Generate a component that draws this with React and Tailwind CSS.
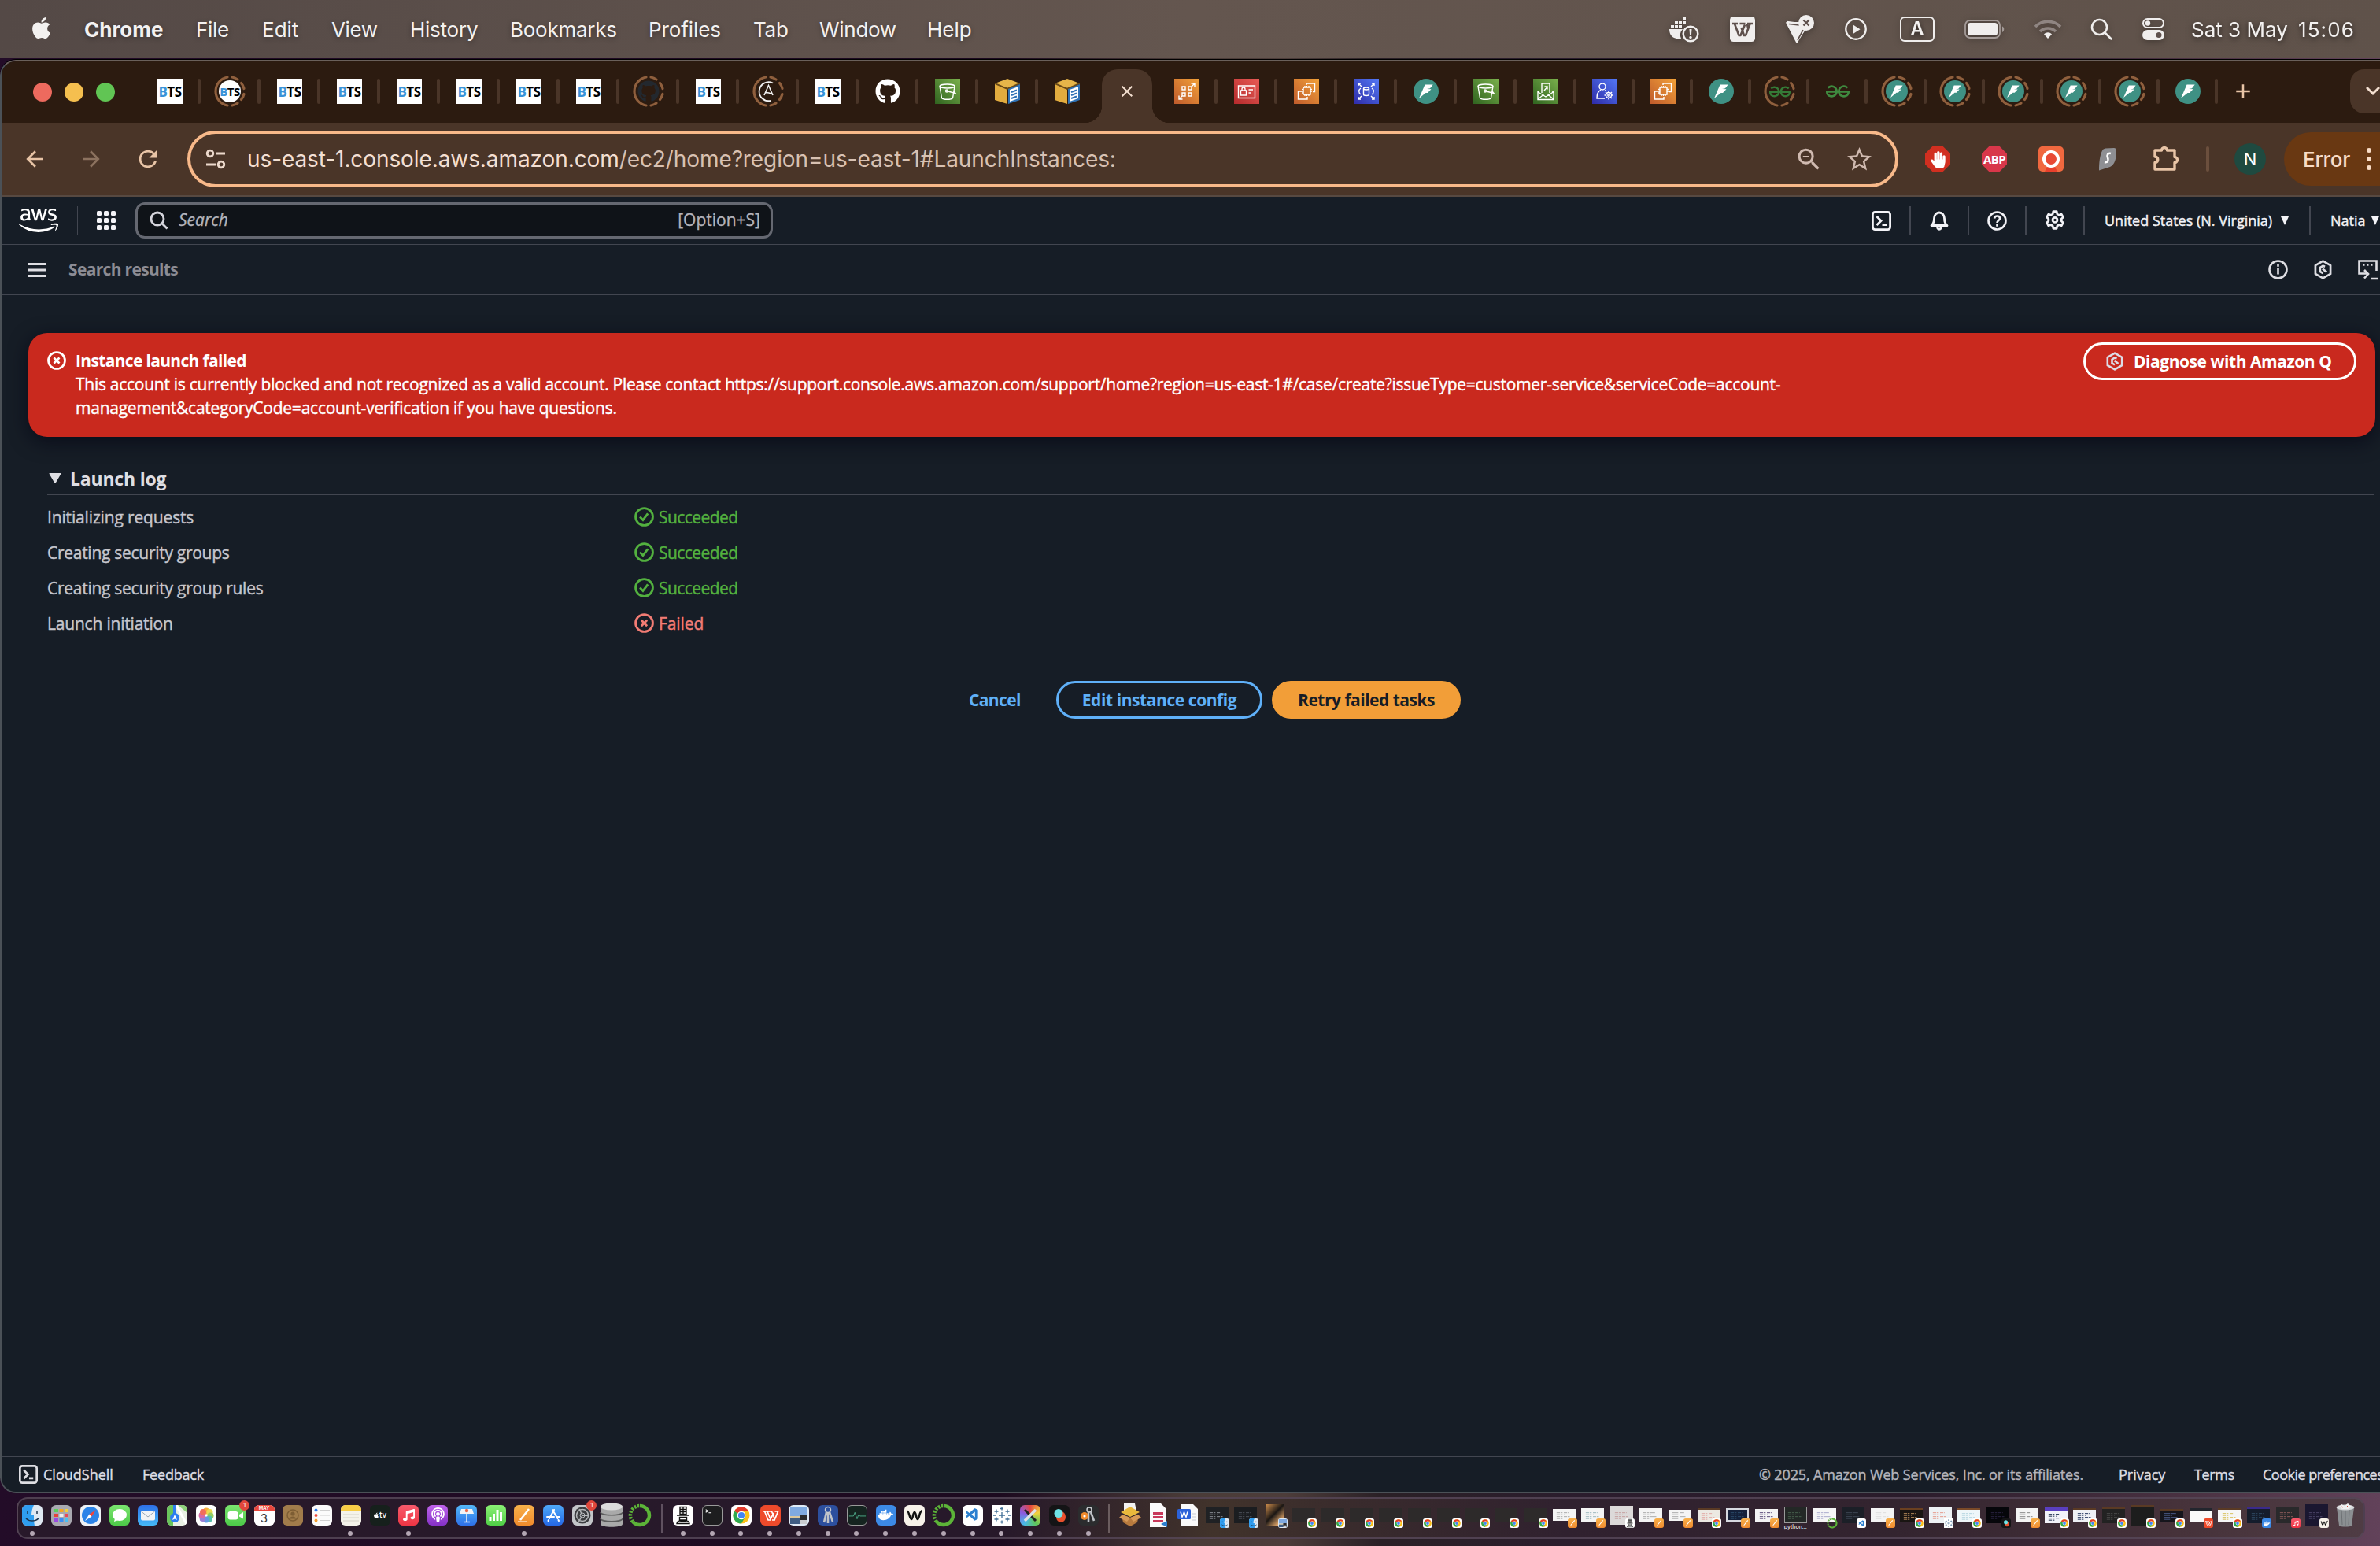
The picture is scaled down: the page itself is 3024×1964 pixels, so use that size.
import React from "react";
import { FaApple, FaGithub, FaDocker, FaHandPaper, FaAws, FaMusic, FaPodcast } from "react-icons/fa";
import { MdStarBorder, MdZoomOut, MdArrowBack, MdArrowForward, MdRefresh, MdOutlineExtension, MdClose, MdAdd } from "react-icons/md";
import { SiGeeksforgeeks } from "react-icons/si";
import { VscVscode } from "react-icons/vsc";

const T = ({ c = "", children }) => <span className={"whitespace-nowrap " + c}>{children}</span>;

/* ---------- macOS menu bar ---------- */

const menus = [
  ["Chrome", "w-[142px] font-bold"],
  ["File", "w-[84px] tracking-[-0.3px]"],
  ["Edit", "w-[88px]"],
  ["View", "w-[100px] tracking-[-0.4px]"],
  ["History", "w-[127px] tracking-[-0.25px]"],
  ["Bookmarks", "w-[176px] tracking-[-0.25px]"],
  ["Profiles", "w-[133px] tracking-[-0.1px]"],
  ["Tab", "w-[84px] tracking-[-0.3px]"],
  ["Window", "w-[137px] tracking-[-0.3px]"],
  ["Help", "w-[80px]"],
];

function MenuBar() {
  return (
    <div className="flex h-[74px] items-center bg-linear-to-r from-[#544946] via-[#64564f] to-[#5f524a] pl-[39px] text-[26px] text-[#f3f1f0] [text-shadow:0_2px_6px_rgba(0,0,0,0.35)]">
      <div className="w-[68px]"><FaApple size={31} className="-mt-1 -ml-[2px]" /></div>
      {menus.map(([name, c]) => (
        <div key={name} className={c}><T>{name}</T></div>
      ))}
      <div className="ml-auto flex items-center drop-shadow-[0_2px_4px_rgba(0,0,0,0.3)]">
        <svg width="40" height="34" viewBox="0 0 40 34" className="mr-[38px]" fill="#f0eeed">
          <path d="M1 17h17a11 11 0 0 0-2 12c-3 1-6 0-9-1-4-2-6-6-6-11z" />
          <path d="M3 12h4v4H3zM8 12h4v4H8zM13 12h4v4h-4zM8 7h4v4H8zM13 7h4v4h-4zM18 7h4v4h-4zM18 2h4v4h-4z" />
          <circle cx="28" cy="23" r="9.3" fill="none" stroke="#f0eeed" strokeWidth="2.5" />
          <path d="M26.5 17h3l-.5 7h-2z" /><circle cx="28" cy="27.5" r="1.7" />
        </svg>
        <svg width="32" height="32" viewBox="0 0 32 32" className="mr-[38px]">
          <rect width="32" height="32" rx="4.5" fill="#f0eeed" />
          <path d="M3 9h7M6 9.500l5.500 14.500h2L19 10.500M12.500 9h7M14.500 14l3.500 10h2L25.500 9.500M22 9h7M22 9.500l1 5" fill="none" stroke="#5e504c" strokeWidth="2.600" strokeLinejoin="round" />
        </svg>
        <svg width="38" height="38" viewBox="0 0 38 38" className="mr-[38px]">
          <path d="M2 10h16c0 6 3 9 8 10L15 35z" fill="#f0eeed" />
          <path d="M2 10l13 25 9-15M2 10l16 2" fill="none" stroke="#f0eeed" strokeWidth="2.500" strokeLinejoin="round" />
          <path d="M5 12.500l13 1.500M23 20l-7 13" stroke="#5e504c" strokeWidth="1.600" />
          <circle cx="27" cy="11" r="10" fill="#f0eeed" />
          <path d="M23.500 7.500l7 7m0-7l-7 7" stroke="#5e504c" strokeWidth="2.400" />
        </svg>
        <svg width="28" height="28" viewBox="0 0 28 28" className="mr-[42px]">
          <circle cx="14" cy="14" r="12.700" fill="none" stroke="#f0eeed" strokeWidth="2.400" />
          <path d="M10.500 8.500v11.500l9-5.800z" fill="#f0eeed" />
        </svg>
        <div className="mr-[38px] flex h-[32px] w-[44px] items-center justify-center rounded-[6px] border-2 border-[#f0eeed] text-[24px] font-semibold">A</div>
        <svg width="52" height="25" viewBox="0 0 52 25" className="mr-[36px]">
          <rect x="1" y="1" width="44" height="22" rx="6" fill="none" stroke="#a39a97" strokeWidth="1.800" />
          <rect x="4" y="4" width="38" height="16" rx="3.500" fill="#f0eeed" />
          <path d="M48 8.500c3 1 3 6 0 7.500z" fill="#a39a97" />
        </svg>
        <svg width="36" height="26" viewBox="0 0 36 26" className="mr-[36px]" fill="none" strokeWidth="3.600">
          <path d="M2 10a22.500 22.500 0 0 1 32 0" stroke="#8f8582" />
          <path d="M8 16a14.500 14.500 0 0 1 20 0" stroke="#8f8582" />
          <path d="M18 25l-5-5.500c3-3 7-3 10 0z" fill="#f0eeed" />
        </svg>
        <svg width="28" height="28" viewBox="0 0 28 28" className="mr-[38px]" fill="none" stroke="#f0eeed" strokeWidth="2.500">
          <circle cx="11.500" cy="11.500" r="9.500" /><path d="M18.500 18.500l8 8" strokeLinecap="round" />
        </svg>
        <svg width="28" height="28" viewBox="0 0 28 28" className="mr-[34px]">
          <rect x="1" y="1" width="26" height="11" rx="5.500" fill="none" stroke="#f0eeed" strokeWidth="2" /><circle cx="7" cy="6.500" r="3.200" fill="#f0eeed" />
          <rect x="0" y="15" width="28" height="13" rx="6.500" fill="#f0eeed" /><circle cx="21" cy="21.500" r="3.500" fill="#5e504c" />
        </svg>
        <div className="w-[136px]"><T>Sat 3 May</T></div>
        <div className="w-[104px] tracking-[1.1px]"><T>15:06</T></div>
      </div>
    </div>
  );
}

/* ---------- Tab favicons ---------- */

const Ring = ({ children }) => (
  <div className="relative flex size-[40px] items-center justify-center">
    <svg viewBox="0 0 40 40" className="absolute inset-0" fill="none" stroke="#8f5f3d" strokeWidth="3.200" strokeLinecap="round">
      <path d="M17 2A18.300 18.300 0 0 0 17 38" />
      <path d="M23 2a18 18 0 0 1 7 3M34.500 9.500a18 18 0 0 1 3.500 7M38 23.500a18 18 0 0 1-3.500 7M30 35a18 18 0 0 1-7 3" />
    </svg>
    {children}
  </div>
);
const BtsText = ({ c }) => (
  <span className={"font-bold leading-none tracking-[-0.5px] text-black " + c}><span className="text-[#3a93d8]">B</span>TS</span>
);
const Bts = () => <div className="flex size-[32px] items-center justify-center bg-white font-['Open_Sans',sans-serif]"><BtsText c="text-[17px]" /></div>;
const BtsRing = () => <Ring><div className="flex size-[28px] items-center justify-center rounded-full bg-white font-['Open_Sans',sans-serif]"><BtsText c="text-[15px]" /></div></Ring>;
const GhRing = () => <Ring><FaGithub size={28} color="#23282e" /></Ring>;
const ARing = () => (
  <Ring>
    <svg width="28" height="28" viewBox="0 0 28 28" fill="none" stroke="#f2f2f2" strokeWidth="1.800">
      <path d="M20 3.500A12 12 0 1 0 17 26" /><path d="M9 19l5.500-12.500L20 19M11 15.500c3 0 5 .5 8 2" strokeWidth="1.600" />
    </svg>
  </Ring>
);
const Gh = () => <FaGithub size={32} color="#fff" />;
const Tile = ({ c, children }) => (
  <div className={"size-[32px] bg-linear-to-tr " + c}>
    <svg viewBox="0 0 32 32" fill="none" stroke="#fff" strokeWidth="1.400">{children}</svg>
  </div>
);
const Bucket = () => (
  <Tile c="from-[#306420] to-[#7ab04c]">
    <ellipse cx="15.500" cy="9.500" rx="9.500" ry="2.500" /><path d="M6 9.500l2.500 15c2 2.400 12 2.400 14 0l2.500-15" /><circle cx="15" cy="15.500" r="1.500" /><path d="M16.500 16l9.500 2.500-2-2.500" />
  </Tile>
);
const Mail = () => (
  <Tile c="from-[#306420] to-[#7ab04c]">
    <path d="M8 16H6v10.500h20V16h-2M6 26l7.500-6M26 26l-7.500-6M6.500 17l9.500 6 9.500-6M11 18V6h10v12M14 15l4-4.500M14.500 10H18v3.500" />
  </Tile>
);
const Scale = () => (
  <Tile c="from-[#bf5b2c] to-[#f2a138]">
    <path d="M10 10h4v4h-4zM18 10h4v4h-4zM10 18h4v4h-4zM18 18h4v4h-4zM22 10l4-4M21.500 6H26v4.500M10 22l-4 4M10.500 26H6v-4.500" />
  </Tile>
);
const Iam = () => (
  <Tile c="from-[#b52a2c] to-[#e85a55]">
    <path d="M5.500 9h21v15.500h-21zM8.500 15h7v6h-7zM10 15v-2a2 2 0 0 1 4 0v2M18.500 14h5.500M18.500 18h3" />
  </Tile>
);
const Ec2 = () => (
  <Tile c="from-[#bf5b2c] to-[#f2a138]">
    <path d="M12 11h9v9h-9zM14 11V9M16.500 11V9M19 11V9M14 22v-2M16.500 22v-2M19 22v-2M12 13.500h-2M12 16h-2M12 18h-2M23 13.500h-2M23 16h-2M16 8V6h10.500v10.500H24M10 16H5.500v10H17v-3" />
  </Tile>
);
const Rds = () => (
  <Tile c="from-[#2f2aa8] to-[#5478f5]">
    <ellipse cx="16" cy="12.500" rx="3.500" ry="1.500" /><path d="M12.500 12.500v7.500c0 2 7 2 7 0v-7.500M6 9V6h3M6 6l4 4M26 9V6h-3M26 6l-4 4M6 23v3h3M6 26l4-4M26 23v3h-3M26 26l-4-4M9 12c-3 2-3 6 0 8M23 12c3 2 3 6 0 8" />
  </Tile>
);
const Cognito = () => (
  <Tile c="from-[#2f2aa8] to-[#5478f5]">
    <circle cx="13" cy="10" r="4" /><path d="M16 25H6c0-5 1-9 5-10.500M16 14.500l2 1.500" /><circle cx="21" cy="21" r="3.500" /><circle cx="21" cy="21" r="1.200" /><path d="M21 15.500v2M21 24.500v2M15.500 21h2M24.500 21h2M17 17l1.500 1.500M23.500 23.500L25 25M25 17l-1.500 1.500M17 25l1.500-1.500" />
  </Tile>
);
const Box = () => (
  <svg width="32" height="32" viewBox="0 0 32 32">
    <path d="M0 6l16-6 16 6-16 6z" fill="#e6b549" /><path d="M0 6l16 7v19L0 27z" fill="#e2ac3f" /><path d="M0 6l16 7 16-7" fill="none" stroke="#6a4a18" strokeWidth="2" />
    <path d="M17 13l15-6v20l-15 5z" fill="#2f72b5" /><path d="M19 14l11-4v15l-11 4z" fill="#fff" /><path d="M21 17l7-2.500M21 21l7-2.500M21 25l7-2.500" stroke="#2f72b5" strokeWidth="2" />
  </svg>
);
const Bolt = ({ s = 32 }) => (
  <svg width={s} height={s} viewBox="0 0 32 32"><circle cx="16" cy="16" r="16" fill="#3f9184" /><path d="M14.500 7.500h10.200L21 12.200l-4 .8 5.500.2L18 18h-2.500L7 25z" fill="#fff" /></svg>
);
const BoltRing = () => <Ring><Bolt s={28} /></Ring>;
const Gfg = () => <SiGeeksforgeeks size={30} color="#3f8a3f" />;
const GfgRing = () => <Ring><SiGeeksforgeeks size={27} color="#357a37" /></Ring>;

const left = [Bts, BtsRing, Bts, Bts, Bts, Bts, Bts, Bts, GhRing, Bts, ARing, Bts, Gh, Bucket, Box, Box];
const right = [Scale, Iam, Ec2, Rds, Bolt, Bucket, Mail];
const right2 = [Cognito, Ec2, Bolt, GfgRing, Gfg, BoltRing, BoltRing, BoltRing, BoltRing, BoltRing, Bolt];

const Tab = ({ Icon, w, sep = true }) => (
  <div className={"relative flex h-[40px] shrink-0 items-center justify-center " + w}>
    <Icon />
    {sep && <div className="absolute top-[4px] -right-[1px] h-[32px] w-[4px] rounded-full bg-[#4a3528]" />}
  </div>
);

function TabStrip() {
  return (
    <div className="flex h-[78px] items-center bg-[#2c1b10] pb-[2px] pl-[40px]">
      <div className="flex w-[136px] gap-[16px] pt-[2px]">
        <div className="size-[24px] rounded-full bg-[#ed6a5e]" />
        <div className="size-[24px] rounded-full bg-[#f5bf4f]" />
        <div className="size-[24px] rounded-full bg-[#61c554]" />
      </div>
      {left.map((I, i) => <Tab key={i} Icon={I} w="w-[76px]" sep={i < 15} />)}
      <div className="relative mx-[6px] mt-[12px] flex h-[68px] w-[64px] shrink-0 items-center justify-center rounded-t-[20px] bg-[#4a3528] pb-[12px]">
        <div className="absolute bottom-0 -left-[22px] size-[22px] bg-[radial-gradient(circle_at_0_0,transparent_22px,#4a3528_22.5px)]" />
        <div className="absolute -right-[22px] bottom-0 size-[22px] bg-[radial-gradient(circle_at_100%_0,transparent_22px,#4a3528_22.5px)]" />
        <MdClose size={24} color="#f3dfd0" />
      </div>
      {right.map((I, i) => <Tab key={i} Icon={I} w="w-[76px]" />)}
      {right2.map((I, i) => <Tab key={i} Icon={I} w="w-[74.1px]" />)}
      <div className="flex w-[66px] justify-center"><MdAdd size={30} color="#e8c4a6" /></div>
      <div className="ml-auto flex h-[56px] w-[38px] items-center justify-end rounded-l-[18px] bg-[#4a3528]">
        <svg width="18" height="14" viewBox="0 0 18 14" fill="none" stroke="#f3dfd0" strokeWidth="3"><path d="M1 2l8 8 8-8" /></svg>
      </div>
    </div>
  );
}

function Toolbar() {
  return (
    <div className="flex h-[92px] items-center bg-[#4a3528] pl-[26px] text-[#e8c4a6]">
      <div className="w-[72px]"><MdArrowBack size={32} /></div>
      <div className="w-[72px] text-[#8c725f]"><MdArrowForward size={32} /></div>
      <div className="w-[66px]"><MdRefresh size={34} className="-ml-px" /></div>
      <div className="flex h-[72px] w-[2174px] shrink-0 items-center rounded-full border-4 border-[#f8b98a] pl-[18px]">
        <svg width="28" height="28" viewBox="0 0 28 28" className="mr-[26px]" fill="none" stroke="#ecd9cc" strokeWidth="2.800">
          <circle cx="7" cy="7" r="3.800" /><path d="M14 7h12M2 21h12" /><circle cx="21" cy="21" r="3.800" />
        </svg>
        <T c="text-[28px] tracking-[-0.09px] text-[#f3dfd2]">us-east-1.console.aws.amazon.com<span className="text-[#d8c1b2]">/ec2/home?region=us-east-1#LaunchInstances:</span></T>
        <MdZoomOut size={37} className="mr-[27px] ml-auto text-[#d0bab0]" />
        <MdStarBorder size={37} className="mr-[27px] text-[#d0bab0]" />
      </div>
      <div className="flex w-[466px] shrink-0 items-center">
        <div className="mr-[40px] ml-[34px] flex size-[32px] shrink-0 items-center justify-center bg-[#d12f20] [clip-path:polygon(29%_0,71%_0,100%_29%,100%_71%,71%_100%,29%_100%,0_71%,0_29%)]"><FaHandPaper size={21} color="#fff" /></div>
        <div className="mr-[40px] flex size-[32px] shrink-0 items-center justify-center bg-[#d8374a] font-['Open_Sans',sans-serif] text-[15px] font-bold tracking-[-0.6px] text-white [clip-path:polygon(29%_0,71%_0,100%_29%,100%_71%,71%_100%,29%_100%,0_71%,0_29%)]">ABP</div>
        <svg width="32" height="32" viewBox="0 0 32 32" className="mr-[40px] shrink-0">
          <rect width="32" height="32" rx="5" fill="#f0683f" /><path d="M8 32l4-8h8l4 8z" fill="#e8402c" /><circle cx="16" cy="16" r="9" fill="#e84a35" stroke="#fff" strokeWidth="4" />
        </svg>
        <svg width="32" height="32" viewBox="0 0 32 32" className="mr-[40px] shrink-0">
          <path d="M9 5.500Q10 3 13 2.500L24 2q3 0 3 3.500C27 16 25 23 19 26L5 30.500c0-10 1-19 4-25z" fill="#8e8f93" /><path d="M20 9c-4-1-5 2-4 5s1 7-4 6" fill="none" stroke="#fff" strokeWidth="2.600" />
        </svg>
        <svg width="36" height="36" viewBox="0 0 36 36" className="mr-[33px] shrink-0" fill="none" stroke="currentColor" strokeWidth="3.400" strokeLinejoin="round">
          <path d="M4 7h8.500a3.500 3.500 0 0 1 7 0H29v8.500a3.500 3.500 0 0 1 0 7V31H4v-8.500c5-.5 5-7 0-7.500z" />
        </svg>
        <div className="mr-[32px] h-[32px] w-[4px] shrink-0 rounded-full bg-[#6b4f3d]" />
        <div className="flex size-[40px] shrink-0 items-center justify-center rounded-full bg-[#1f4a40] text-[22px] text-white">N</div>
      </div>
      <div className="ml-[24px] flex h-[68px] flex-1 items-center rounded-l-full rounded-tr-[6px] rounded-br-[6px] bg-[#693812] pl-[24px]">
        <div className="w-[72px]"><T c="text-[26px] font-medium tracking-[-0.3px] text-[#f9dcc6]">Error</T></div>
        <svg width="8" height="28" viewBox="0 0 8 28" fill="#f9dcc6" className="ml-[8px] shrink-0"><circle cx="4" cy="3" r="3" /><circle cx="4" cy="14" r="3" /><circle cx="4" cy="25" r="3" /></svg>
      </div>
    </div>
  );
}

/* ---------- AWS console ---------- */

const CloudShellIcon = ({ s = 25 }) => (
  <svg width={s} height={s} viewBox="0 0 25 25" fill="none" stroke="currentColor" strokeWidth="2.800">
    <rect x="1.400" y="1.400" width="22.200" height="22.200" rx="3" /><path d="M6.500 7l5.500 5.500L6.500 18M13.500 17.500h5.500" />
  </svg>
);
const AmazonQ = ({ s = 24 }) => (
  <svg width={s} height={s} viewBox="0 0 24 24" fill="none" stroke="currentColor" strokeWidth="2.600">
    <path d="M12 1.600l9.200 5.200v10.400L12 22.400 2.800 17.200V6.800z" strokeLinejoin="round" />
    <path d="M14.500 8.500L12 7.500 8.500 9.700v4.600l3.500 2.200M11.500 11l5 4" />
  </svg>
);
const Caret = () => <svg width="12" height="12" viewBox="0 0 12 12" fill="currentColor"><path d="M.5 0h11L6 12z" /></svg>;
const DownTriangle = () => <svg width="16" height="13" viewBox="0 0 16 13" fill="currentColor"><path d="M1 0h14q1 0 .4 1L9 12q-1 1.500-2 0L.6 1Q0 0 1 0z" /></svg>;

const HeadCell = ({ children }) => (
  <div className="flex h-[36px] w-[73.600px] items-center justify-center border-r-2 border-[#424650]">{children}</div>
);

function ConsoleHeader() {
  return (
    <div className="flex h-[61px] items-center border-b border-[#424650] pl-[22px] text-[#f3f3f7]">
      <FaAws size={50} className="shrink-0 text-white" />
      <div className="ml-[24px] h-[36px] w-px bg-[#424650]" />
      <div className="mr-[25px] ml-[24px] grid grid-cols-3 gap-[3px]">
        {[...Array(9)].map((_, i) => <div key={i} className="size-[6px] rounded-[1.500px] bg-[#f3f3f7]" />)}
      </div>
      <div className="flex h-[46px] w-[810px] shrink-0 items-center rounded-[12px] border-3 border-[#656871] bg-[#0f1318] pr-[13px] pl-[15px] text-[21px] text-[#b4b4bb] [-webkit-text-stroke:0.3px_currentColor]">
        <svg width="24" height="24" viewBox="0 0 24 24" fill="none" stroke="#d5d5dc" strokeWidth="2.800" className="mr-[13px]"><circle cx="10" cy="10" r="8" /><path d="M15.500 15.500l7 7" /></svg>
        <T c="italic">Search</T>
        <T c="ml-auto">[Option+S]</T>
      </div>
      <div className="ml-auto flex items-center text-[18px] [-webkit-text-stroke:0.4px_currentColor]">
        <HeadCell><CloudShellIcon /></HeadCell>
        <HeadCell>
          <svg width="24" height="26" viewBox="0 0 24 26" fill="none" stroke="currentColor" strokeWidth="2.800"><path d="M2 19.500c3-2.500 3.500-5 3.500-9a6.500 7.500 0 0 1 13 0c0 4 .5 6.500 3.500 9z" strokeLinejoin="round" /><path d="M9.500 20.500c0 5 5 5 5 0" /></svg>
        </HeadCell>
        <HeadCell>
          <svg width="25" height="25" viewBox="0 0 25 25" fill="none" stroke="currentColor" strokeWidth="2.600"><circle cx="12.500" cy="12.500" r="11" /><path d="M9 9.500c.5-4 7-4 7 0 0 2.500-3.500 2.500-3.500 5.500M12.500 17v2.800" /></svg>
        </HeadCell>
        <HeadCell>
          <svg width="26" height="26" viewBox="0 0 24 24" fill="none" stroke="currentColor" strokeWidth="2.500" strokeLinejoin="round"><path d="M10 1.500h4l.6 3 2.200 1.200 2.800-1 2 3.600-2.100 2v2.400l2.100 2-2 3.600-2.800-1-2.200 1.200-.6 3h-4l-.6-3-2.200-1.200-2.800 1-2-3.600 2.100-2v-2.400l-2.100-2 2-3.600 2.800 1L9.400 4.500z" /><circle cx="12" cy="11.500" r="2.800" /></svg>
        </HeadCell>
        <div className="flex h-[36px] w-[287px] items-center border-r-2 border-[#424650] pl-[25px]">
          <div className="w-[223px]"><T>United States (N. Virginia)</T></div><Caret />
        </div>
        <div className="flex w-[88px] items-center pl-[25px]"><div className="w-[52px]"><T>Natia</T></div><Caret /></div>
      </div>
    </div>
  );
}

function Breadcrumbs() {
  return (
    <div className="flex h-[64px] items-center border-b border-[#424650] pl-[34px] text-[#dedee3]">
      <svg width="22" height="18" viewBox="0 0 22 18" fill="currentColor"><path d="M0 0h22v3H0zM0 7.500h22v3H0zM0 15h22v3H0z" /></svg>
      <T c="ml-[29px] text-[21px] font-bold tracking-[-0.67px] text-[#8c8c94]">Search results</T>
      <svg width="25" height="25" viewBox="0 0 25 25" fill="none" stroke="currentColor" strokeWidth="2.600" className="mr-[32px] ml-auto"><circle cx="12.500" cy="12.500" r="11" /><path d="M12.500 11v7.500M12.500 6v2.800" /></svg>
      <AmazonQ s={25} />
      <svg width="28" height="26" viewBox="0 0 28 26" fill="none" stroke="currentColor" strokeWidth="2.600" className="ml-[32px] shrink-0"><path d="M1.500 13V1.500h22V14M1.500 12.500v5H11M8 13l5 5-5 5.500M17 24h8M6.500 6.500h2M11.500 6.500h2M16.500 6.500h2" /></svg>
    </div>
  );
}

const StatusIcon = ({ ok, s = 25 }) => (
  <svg width={s} height={s} viewBox="0 0 24 24" fill="none" stroke="currentColor" strokeWidth="2.700">
    <circle cx="12" cy="12" r="10.500" />
    {ok ? <path d="M6.800 12l3.700 4 6-8" /> : <path d="M8.500 8.500l7 7m0-7l-7 7" />}
  </svg>
);

const log = [
  ["Initializing requests", true, "tracking-[-0.15px]"],
  ["Creating security groups", true, "tracking-[-0.28px]"],
  ["Creating security group rules", true, "tracking-[-0.27px]"],
  ["Launch initiation", false, "tracking-[-0.2px]"],
];

function Content() {
  return (
    <div className="flex-1 text-[21px] leading-[30px] [-webkit-text-stroke:0.4px_currentColor]">
      <div className="mt-[48px] mr-[6px] ml-[34px] flex h-[132px] items-start rounded-[24px] bg-[#c9291e] pt-[12px] pl-[24px] text-white shadow-[0_6px_24px_rgba(4,6,20,0.7)]">
        <div className="mt-[11px] mr-[12px]"><StatusIcon s={24} /></div>
        <div className="mt-[8px] flex flex-col">
          <T c="font-bold tracking-[-0.67px] [-webkit-text-stroke:0]">Instance launch failed</T>
          <T c="tracking-[-0.272px]">This account is currently blocked and not recognized as a valid account. Please contact https://support.console.aws.amazon.com/support/home?region=us-east-1#/case/create?issueType=customer-service&serviceCode=account-</T>
          <T c="tracking-[-0.24px]">management&categoryCode=account-verification if you have questions.</T>
        </div>
        <div className="mr-[24px] ml-auto flex h-[48px] w-[347px] items-center rounded-full border-3 border-white pl-[25px]">
          <span className="mr-[12px] text-[#dcdce6]"><AmazonQ /></span>
          <T c="font-bold tracking-[-0.45px] [-webkit-text-stroke:0]">Diagnose with Amazon Q</T>
        </div>
      </div>
      <div className="mt-[33px] mr-[7px] ml-[58px] flex h-[41px] items-center border-b border-[#424650] text-[#dedee3]">
        <span className="mr-[11px] mb-px ml-[2px] flex"><DownTriangle /></span>
        <T c="mb-px text-[23px] font-bold tracking-[-0.2px] [-webkit-text-stroke:0]">Launch log</T>
      </div>
      <div className="mt-[5px] ml-[58px] text-[#c6c6cd]">
        {log.map(([name, ok, c]) => (
          <div key={name} className="flex h-[45px] items-center">
            <div className="w-[746px]"><T c={c}>{name}</T></div>
            <div className={"flex items-center gap-[6px] " + (ok ? "text-[#53b13f]" : "text-[#f27c74]")}>
              <StatusIcon ok={ok} /><T c={ok ? "tracking-[-0.55px]" : "tracking-[-0.1px]"}>{ok ? "Succeeded" : "Failed"}</T>
            </div>
          </div>
        ))}
      </div>
      <div className="mt-[51px] ml-[1229px] flex h-[48px] items-center font-bold text-[#5fb0f8] [-webkit-text-stroke:0]">
        <div className="w-[111px]"><T c="tracking-[-0.6px]">Cancel</T></div>
        <div className="mr-[12px] flex h-[48px] w-[262px] items-center justify-center rounded-full border-3 border-[#5fb0f8]"><T c="tracking-[-0.42px]">Edit instance config</T></div>
        <div className="flex h-[48px] w-[240px] items-center justify-center rounded-full bg-[#f29e38] text-[#161d26]"><T c="tracking-[-0.5px]">Retry failed tasks</T></div>
      </div>
    </div>
  );
}

function Footer() {
  return (
    <div className="flex h-[45px] items-center border-t border-[#424650] pl-[22px] text-[18px] text-[#dedee3] [-webkit-text-stroke:0.4px_currentColor]">
      <CloudShellIcon s={24} />
      <div className="ml-[7px] w-[126px]"><T>CloudShell</T></div>
      <T c="tracking-[-0.2px]">Feedback</T>
      <div className="ml-auto w-[457px] text-[#b4b4bb]"><T c="tracking-[-0.15px]">© 2025, Amazon Web Services, Inc. or its affiliates.</T></div>
      <div className="w-[96px]"><T>Privacy</T></div>
      <div className="w-[87px]"><T c="tracking-[-0.35px]">Terms</T></div>
      <div className="w-[149px]"><T c="tracking-[-0.5px]">Cookie preferences</T></div>
    </div>
  );
}

/* ---------- Dock ---------- */

const App26 = ({ c = "", children }) => (
  <div className={"size-[26px] overflow-hidden rounded-[6px] " + c}><svg viewBox="0 0 26 26" className="size-full" fill="none">{children}</svg></div>
);
const ChromeLogo = () => (
  <g>
    <circle cx="13" cy="13" r="10.500" fill="#fbc118" />
    <path d="M13 13L3.900 7.750A10.500 10.500 0 0 1 22.100 7.750H13z" fill="#e33b2e" />
    <path d="M13 13L3.900 7.750A10.500 10.500 0 0 0 13 23.500l4.500-8z" fill="#2da94f" />
    <circle cx="13" cy="13" r="5.300" fill="#fff" /><circle cx="13" cy="13" r="4.100" fill="#4285f4" />
  </g>
);
const Conda = () => (
  <svg width="30" height="30" viewBox="0 0 30 30" fill="none" stroke="#5cb338" strokeWidth="4.500"><path d="M15 3a12 12 0 1 1-9 20" /><path d="M6 23a12 12 0 0 1 9-20" strokeDasharray="2.500 1.500" /></svg>
);
const icons = {
  finder: <App26 c="bg-[#dfe8f2]"><path d="M0 0h15c-2 4-3 8-3 13h3c0 5 0 9 1 13H0z" fill="#2f9df0" /><path d="M7 8v3M19 8v3M5 17c4 4 12 4 16 0" stroke="#1c3550" strokeWidth="1.500" /></App26>,
  launch: <App26 c="bg-[#a9a9b0]"><path d="M4 5h5v4H4z" fill="#5bd15b" /><path d="M10.500 5h5v4h-5z" fill="#f5a623" /><path d="M17 5h5v4h-5z" fill="#f3d03e" /><path d="M4 11h5v4H4z" fill="#e5423b" /><path d="M10.500 11h5v4h-5z" fill="#eee" /><path d="M17 11h5v4h-5z" fill="#e8485a" /><path d="M4 17h5v4H4z" fill="#9a4be0" /><path d="M10.500 17h5v4h-5z" fill="#3b8ef3" /><path d="M17 17h5v4h-5z" fill="#4bc0f3" /></App26>,
  safari: <App26 c="bg-[#eef1f5]"><circle cx="13" cy="13" r="11" fill="#2b83e8" /><path d="M20 6l-5.500 8.500-3-3z" fill="#f0443a" /><path d="M6 20l5.500-8.500 3 3z" fill="#fff" /></App26>,
  messages: <App26 c="bg-linear-to-b from-[#7be56f] to-[#4cc948]"><ellipse cx="13" cy="12.500" rx="9" ry="7.500" fill="#fff" /><path d="M7 17l-1 4 5-2z" fill="#fff" /></App26>,
  mail: <App26 c="bg-linear-to-b from-[#2f6fe8] to-[#46b8f7]"><rect x="4" y="7" width="18" height="12.500" rx="2" fill="#f2f4f6" /><path d="M4.500 8l8.500 7 8.500-7" stroke="#9aa7b5" /></App26>,
  maps: <App26 c="bg-[#e9efe4]"><path d="M0 0h8v26H0z" fill="#6ac45c" /><path d="M14 0h12v10z" fill="#8ed07a" /><path d="M26 26L12 0" stroke="#fff" strokeWidth="3" /><path d="M10 0v12" stroke="#2e7df0" strokeWidth="4" /><circle cx="10" cy="16" r="6" fill="#2e7df0" /><path d="M10 12l3 7-3-1.500L7 19z" fill="#fff" /></App26>,
  photos: <App26 c="bg-white"><g opacity=".88"><circle cx="13" cy="7.500" r="4" fill="#f6a623" /><circle cx="17.500" cy="9" r="4" fill="#e9d53a" /><circle cx="18.500" cy="13.500" r="4" fill="#8ac64a" /><circle cx="17" cy="17.500" r="4" fill="#3fb5a0" /><circle cx="13" cy="18.500" r="4" fill="#4c8de0" /><circle cx="8.500" cy="17" r="4" fill="#8c6bd0" /><circle cx="7.500" cy="13" r="4" fill="#d2569a" /><circle cx="9" cy="9" r="4" fill="#ef5b45" /></g></App26>,
  facetime: <App26 c="bg-linear-to-b from-[#7be56f] to-[#4cc948]"><rect x="3.500" y="8" width="13" height="10.500" rx="3" fill="#fff" /><path d="M18 12l5-3v8.500l-5-3z" fill="#fff" /></App26>,
  cal: <div className="flex size-[26px] flex-col items-center overflow-hidden rounded-[6px] bg-white"><div className="h-[8px] w-full bg-[#e8473c] text-center text-[6px] leading-[8px] font-semibold text-white">MAY</div><div className="text-[15px] leading-[17px] text-[#333]">3</div></div>,
  contacts: <App26 c="bg-[#a17c4b]"><circle cx="13" cy="13" r="7" stroke="#7d5d34" strokeWidth="1.500" /><circle cx="13" cy="11" r="2.600" fill="#7d5d34" /><path d="M8.500 17.500c2-4 7-4 9 0z" fill="#7d5d34" /></App26>,
  reminders: <App26 c="bg-[#fbfbfb]"><circle cx="5.500" cy="6.500" r="2" fill="#2f7ef0" /><circle cx="5.500" cy="13" r="2" fill="#ef4a3c" /><circle cx="5.500" cy="19.500" r="2" fill="#f29d2e" /><path d="M10 6.500h13M10 13h13M10 19.500h13" stroke="#d0d0d0" /></App26>,
  notes: <App26 c="bg-[#f4f2ea]"><path d="M0 0h26v7H0z" fill="#f8cd46" /><path d="M3 12h20M3 16h20M3 20h20" stroke="#d5d2c8" /></App26>,
  tv: <div className="flex size-[26px] items-center justify-center rounded-[6px] bg-[#16201c] text-[10px] font-medium text-white"><FaApple size={8} />tv</div>,
  music: <div className="flex size-[26px] items-center justify-center rounded-[6px] bg-linear-to-b from-[#f7596b] to-[#ee3444] text-white"><FaMusic size={15} /></div>,
  podcasts: <div className="flex size-[26px] items-center justify-center rounded-[6px] bg-linear-to-b from-[#c062ec] to-[#8530c6] text-white"><FaPodcast size={19} /></div>,
  keynote: <App26 c="bg-linear-to-b from-[#55b8f8] to-[#2f6fe8]"><path d="M6 5h14l2 6H4z" fill="#f2f4f6" /><path d="M13 11v10M9 21.500h8" stroke="#f2f4f6" strokeWidth="1.500" /><circle cx="13" cy="7" r="2.200" fill="#ef6b4a" /></App26>,
  numbers: <App26 c="bg-linear-to-b from-[#8af074] to-[#4fce46]"><path d="M6 20v-5M10.500 20v-9M15 20V6M19.500 20V9" stroke="#fff" strokeWidth="3" /></App26>,
  pages: <App26 c="bg-linear-to-b from-[#f8b04a] to-[#f08a2c]"><path d="M19 5L8 19" stroke="#fff" strokeWidth="2.500" /><path d="M5 21h12" stroke="#fff" /></App26>,
  store: <div className="flex size-[26px] items-center justify-center rounded-[6px] bg-linear-to-b from-[#4fa8f7] to-[#2667e5]"><svg width="20" height="20" viewBox="0 0 20 20" stroke="#fff" strokeWidth="2" strokeLinecap="round"><path d="M11 3L5 14M9 3l6.500 11M2 12h9M14.500 12H18M4 16l-.5 1M16.500 16l.5 1" /></svg></div>,
  settings: <App26 c="bg-[#c3c5c9]"><circle cx="13" cy="13" r="10.500" fill="#3c3d40" /><circle cx="13" cy="13" r="7.500" stroke="#b5b7ba" strokeWidth="1.500" /><path d="M13 13L9 5M13 13l9 .5M13 13l-4.500 8" stroke="#b5b7ba" strokeWidth="1.500" /><circle cx="13" cy="13" r="3" stroke="#b5b7ba" /></App26>,
  db: <svg width="30" height="32" viewBox="0 0 30 32"><path d="M1 5v22c0 5 28 5 28 0V5z" fill="#a9a9a9" /><ellipse cx="15" cy="5" rx="14" ry="4.500" fill="#dcdcdc" /><path d="M1 12c0 5 28 5 28 0M1 20c0 5 28 5 28 0" fill="none" stroke="#5c5c5c" strokeWidth="1.600" /></svg>,
  conda: <Conda />,
  spy: <App26 c="bg-white"><path d="M9 2.500h8v9H9zM9 5.500h8M9 8.500h8M13 2.500v9M5 13h16M8.500 15.500h9v3.500h-9zM5 23.500c1-5 4-3 8-3s7-2 8 3z" stroke="#111" strokeWidth="1.400" /></App26>,
  term: <App26 c="border border-[#9a9a9a] bg-[#1d1d1f]"><path d="M4 5l3 2-3 2M8 9.500h4" stroke="#fff" strokeWidth="1.200" /></App26>,
  chrome: <App26 c="bg-white"><ChromeLogo /></App26>,
  wps: <App26 c="bg-[#ee4a2b]"><path d="M4 8h5l4 10 4-8M9.500 8h5l4 10 4-10h-4M5.500 8l4.500 11h3M15 19h3.500" stroke="#fff" strokeWidth="1.700" /></App26>,
  preview: <App26 c="bg-[#dfeaf6]"><path d="M2 2h22v12H2z" fill="#7fa9e0" /><path d="M2 14h22v3H2z" fill="#dcc79b" /><path d="M2 17h22v7H2z" fill="#3f5d84" /><path d="M14 13h9v11h-9z" fill="#2b2b2e" /><path d="M14 19h9v5h-9z" fill="#c9ccd0" /></App26>,
  keys: <App26 c="bg-[#2c4f9e]"><circle cx="13" cy="6" r="3.500" stroke="#c9ccd0" strokeWidth="1.500" /><path d="M11 9L8 22M13 10v13M15 9l4 12" stroke="#c0c4c9" strokeWidth="2.600" /></App26>,
  activity: <App26 c="border border-[#9a9a9a] bg-[#152420]"><path d="M2 14h6l2-5 3 9 2-6 2 2h8" stroke="#4fae8c" /></App26>,
  docker: <div className="flex size-[26px] items-center justify-center rounded-[6px] bg-[#3c8ae6] text-white"><FaDocker size={19} /></div>,
  w: <App26 c="bg-[#f7f2ea]"><path d="M4 8c2 0 3 10 5 10s2-9 4-9 2 9 4 9 2-11 6-11" stroke="#111" strokeWidth="2.600" /></App26>,
  code: <div className="flex size-[26px] items-center justify-center rounded-[6px] bg-white text-[#2b7fd0]"><VscVscode size={19} /></div>,
  tableau: <App26 c="rounded-none! bg-white"><path d="M13 9v8M9 13h8M13 2.500v4M11 4.500h4M13 19.500v4M11 21.500h4M6 5.500v5M3.500 8h5M20 5.500v5M17.500 8h5M6 15.500v5M3.500 18h5M20 15.500v5M17.500 18h5M2 13h3M21 13h3" stroke="#3f6d96" strokeWidth="1.300" /></App26>,
  color: <App26 c="bg-[conic-gradient(#e6453f,#f2d23f,#5fc65a,#49b8e8,#8a5be0,#e6453f)]"><path d="M6 6l14 14" stroke="#222" strokeWidth="3" /><path d="M20 6L6 20" stroke="#dfe1e4" strokeWidth="3.500" /></App26>,
  blob: <App26 c="bg-[#141416]"><ellipse cx="15" cy="15" rx="6" ry="7" fill="#e8502c" /><circle cx="12" cy="10.500" r="5.500" fill="#6fe3e6" /></App26>,
  keys2: <App26 c="bg-[#2b2c2e]"><circle cx="14" cy="6" r="3" stroke="#c9ccd0" strokeWidth="1.500" /><path d="M13 9v13M16 9l4 11" stroke="#c0c4c9" strokeWidth="2.600" /><circle cx="8" cy="14" r="5" fill="#f08a2c" /><circle cx="8" cy="14" r="1.600" fill="#fff" /></App26>,
  pkg: <svg width="28" height="30" viewBox="0 0 28 30"><path d="M6 0h14l2 10H6z" fill="#f2f2f2" /><path d="M14 4l12 7-12 6L2 11z" fill="#e9b93c" /><path d="M3 14l11 4 11-4-2 10-9 5-9-5z" fill="#b77a3e" /><path d="M0 18l4-4 10 4-4 5zM28 18l-4-4-10 4 4 5z" fill="#d79a58" /></svg>,
  sql: <svg width="26" height="30" viewBox="0 0 26 30"><path d="M2 0h14l7 7v23H2z" fill="#fafafa" /><path d="M6 11h13v3H6zM6 16h13v3H6zM6 21h13v3H6z" fill="#c8385a" /><path d="M16 26l8-4v8z" fill="#2b7fd0" /></svg>,
  word: <svg width="26" height="28" viewBox="0 0 26 28"><path d="M5 0h15l6 6v22H5z" fill="#fafafa" /><path d="M19 12h5M19 16h5M19 20h5" stroke="#c9ccd4" /><rect y="6" width="17" height="13" rx="1.500" fill="#2b62d9" /><path d="M4 9.500l2 6.500 2.500-6 2.500 6 2-6.500" fill="none" stroke="#fff" strokeWidth="1.600" /></svg>,
  trash: <svg width="26" height="30" viewBox="0 0 26 30"><path d="M2 5h22l-3 23c-2 2-14 2-16 0z" fill="#8b8f92" /><path d="M8 8l1 19M13 8v20M18 8l-1 19" stroke="#6d7174" /><ellipse cx="13" cy="5" rx="11.500" ry="3.500" fill="#d9dbdd" /><path d="M5 4l3-3 4 2 4-3 5 4-4 3-8 0z" fill="#f2f2f2" /><path d="M8 4l2 1M15 3l2 2" stroke="#d04a3c" /></svg>,
};

const group1 = [["finder", 1], ["launch"], ["safari"], ["messages"], ["mail"], ["maps"], ["photos"], ["facetime", 0, 1], ["cal"], ["contacts"], ["reminders"], ["notes", 1], ["tv"], ["music", 1], ["podcasts"], ["keynote"], ["numbers"], ["pages", 1], ["store"], ["settings", 0, 1], ["db"], ["conda"]];
const group2 = ["spy", "term", "chrome", "wps", "preview", "keys", "activity", "docker", "w", "conda", "code", "tableau", "color", "blob", "keys2"];

/* Minimised windows: thumbnail classes, badge icon, colour of the content lines */
const wins = [
  ["bg-[#1f2124] h-[20px]", "finder", "#8a8f96"], ["bg-[#1b1d20] h-[20px]", "finder", "#4b5058"],
  ["bg-[linear-gradient(135deg,#c98a4a,#1a1614_45%,#d9a066_80%,#fff)] h-[28px]", "preview", "none"],
  ...Array(9).fill(["bg-[#2d2a2a] h-[18px]", "chrome", "none"]),
  ["bg-[#f4f4f4] h-[15px]", "pages", "#aaa"], ["bg-[#f4f4f4] h-[17px]", "pages", "#9db7bd"], ["bg-[#dcd9d9] h-[24px]", "spy", "#c5a0a0"],
  ["bg-[#f4f4f4] h-[17px]", "pages", "#aaa"], ["bg-[#f4f4f4] h-[14px]", "pages", "#aaa"], ["bg-[#ece9e2] h-[17px] border-t-2 border-[#5a3a24]", "chrome", "#e2a9a4"],
  ["bg-[#14203a] h-[17px] border-2 border-[#d6d9e0]", "pages", "#2b4a6a"], ["bg-[#f4f4f4] h-[16px]", "pages", "#5a4a78"], ["bg-[#232826] h-[21px] border border-[#9a9a9a]", null, "#46604c"],
  ["bg-[#f6f6f6] h-[18px]", "conda", "#aac"], ["bg-[#1b1f27] h-[20px]", "code", "#3d4654"], ["bg-[#f4f4f4] h-[18px]", "pages", "#ddd"],
  ["bg-[#191512] h-[18px] border-t-2 border-[#6b4020]", "chrome", "#b58a5a"], ["bg-[#eef2f5] h-[20px]", "tableau", "#e59a8a"], ["bg-[#eef6f9] h-[18px] border-t-2 border-[#7a4a28]", "chrome", "#b5d5e0"],
  ["bg-[#06060a] h-[20px]", "blob", "#2a2340"], ["bg-[#f4f4f4] h-[17px]", "pages", "#888"], ["bg-[#f2f2f8] h-[20px] border-t-4 border-[#5a3fc0]", "chrome", "#1a2a4a"],
  ["bg-[#eef0f5] h-[17px] border-t-2 border-[#5a3a24]", "chrome", "#23365f"], ["bg-[#222222] h-[20px] border-t-2 border-[#5a3a24]", "chrome", "#4a4a4a"], ["bg-[#1d1d1d] h-[26px] border-t-2 border-[#5a3a24]", "chrome", "none"],
  ["bg-[#15151c] h-[16px] border-t-2 border-[#5a3a24]", "chrome", "#4a5a86"], ["bg-[#fafafa] h-[17px] border-t-4 border-[#23262e]", "wps", "none"], ["bg-[#f6f6f6] h-[17px] border-t-2 border-[#5a3a24]", "chrome", "#d8c05a"],
  ["bg-[#151d2c] h-[20px] border-t-2 border-[#3a2a8a]", "docker", "#2f4a63"], ["bg-[#29292b] h-[20px]", "music", "#8a5a5a"], ["bg-[#1a1730] h-[28px]", "w", "#4a4468"],
];

const DockCell = ({ children, dot, badge }) => (
  <div className="relative flex h-[48px] w-[36.780px] shrink-0 items-center justify-center pb-[8px]">
    {children}
    {badge ? <div className="absolute top-[1px] right-0 flex size-[13px] items-center justify-center rounded-full bg-[#e0473b] text-[8px] text-white">1</div> : null}
    {dot ? <div className="absolute bottom-[2px] left-[15px] size-[6px] rounded-full bg-[#b3a6b3]" /> : null}
  </div>
);

function Dock() {
  return (
    <div className="mt-[5px] ml-[21px] flex h-[53px] w-[2984px] items-center rounded-[14px] border-2 border-[#57495a]/80 bg-[linear-gradient(to_right,#28192a,#27192a_42%,#41332b_51%,#3a2c2c_56%,#30212f_66%,#33242f_80%,#46323a_92%,#4f3c44)]">
      {group1.map(([n, dot, badge], i) => <DockCell key={i} dot={dot} badge={badge}>{icons[n]}</DockCell>)}
      <div className="mx-[8px] h-[36px] w-[2px] shrink-0 bg-[#5f5160]" />
      {group2.map((n) => <DockCell key={n} dot>{icons[n]}</DockCell>)}
      <div className="mx-[7px] h-[36px] w-[2px] shrink-0 bg-[#6b5d5f]" />
      {["pkg", "sql", "word"].map((n) => <DockCell key={n}>{icons[n]}</DockCell>)}
      {wins.map(([c, app, line], i) => (
        <DockCell key={i}>
          <div className={"relative flex items-center justify-center " + (i === 2 ? "w-[22px] " : "w-[29px] ") + c}>
            <svg viewBox="0 0 24 12" className="h-[10px] w-[20px]" stroke={line} strokeWidth="1.200" strokeDasharray="5 1 3 2"><path d="M1 2h18M1 5h12M1 8h20M1 11h9" /></svg>
          </div>
          {app ? <div className="absolute right-[2px] bottom-[12px] flex size-[12px] items-center justify-center"><div className="shrink-0 scale-[0.46]">{icons[app]}</div></div>
            : <div className="absolute bottom-[10px] text-[7px] leading-none text-white">python...</div>}
        </DockCell>
      ))}
      <DockCell>{icons.trash}</DockCell>
    </div>
  );
}

export default function App() {
  return (
    <div className="flex h-[1964px] w-[3024px] flex-col overflow-hidden bg-[linear-gradient(to_right,#230c28,#1c0a1f_42%,#4a3c38_50%,#4d3d3a_54%,#2a2026_58%,#2b1d2d_66%,#2a1c2b_80%,#4a3242_92%,#62425a)] font-['Inter',sans-serif]">
      <MenuBar />
      <div className="mt-px flex h-[1822px] flex-col overflow-hidden rounded-tl-[20px] rounded-bl-[20px] border-t border-black">
        <div className="flex flex-1 flex-col overflow-hidden rounded-tl-[20px] rounded-bl-[20px] border-y-2 border-l-2 border-[#4b5157] border-t-[#6a605b] bg-[#161d26]">
          <TabStrip />
          <Toolbar />
          <div className="h-[2px] bg-[#574941]" />
          <div className="flex flex-1 flex-col font-['Open_Sans',sans-serif]">
            <ConsoleHeader />
            <Breadcrumbs />
            <Content />
            <Footer />
          </div>
        </div>
      </div>
      <Dock />
    </div>
  );
}
